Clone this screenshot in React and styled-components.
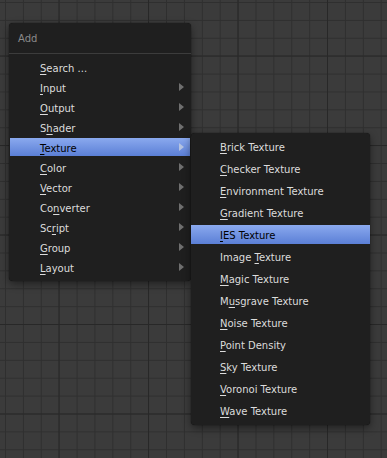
import React from "react";
import styled, { createGlobalStyle } from "styled-components";

const GlobalStyle = createGlobalStyle`
  html, body {
    margin: 0;
    padding: 0;
    width: 387px;
    height: 458px;
    overflow: hidden;
  }
  body {
    font-family: "DejaVu Sans", "Liberation Sans", sans-serif;
  }
`;

const Canvas = styled.div`
  position: relative;
  width: 387px;
  height: 458px;
  background-color: #3b3b3b;
  background-image:
    linear-gradient(90deg, #282828 1px, transparent 1px),
    linear-gradient(0deg, #282828 1px, transparent 1px),
    linear-gradient(90deg, #2f2f2f 1px, transparent 1px),
    linear-gradient(0deg, #2f2f2f 1px, transparent 1px);
  background-size: 89.5px 89.5px, 89.5px 89.5px, 17.9px 17.9px, 17.9px 17.9px;
  background-position: 58.5px 0, 0 56.5px, 5px 0, 0 3px;
`;

const MenuStack = styled.div`
  position: absolute;
  left: 9px;
  top: 23px;
  display: flex;
  align-items: flex-start;
`;

const Menu = styled.div`
  width: ${({ $width }) => $width}px;
  margin-top: ${({ $offset }) => $offset || 0}px;
  padding: ${({ $pad }) => $pad};
  box-sizing: border-box;
  background: #1f1f1f;
  border-radius: 4px;
  box-shadow: 0 0 1px rgba(0, 0, 0, 0.9), 0 3px 9px rgba(0, 0, 0, 0.45);
  display: flex;
  flex-direction: column;
  gap: ${({ $gap }) => $gap}px;
`;

const Title = styled.div`
  height: 30px;
  padding-left: 9px;
  display: flex;
  align-items: center;
  font-size: 10px;
  color: #8a8a8a;
  border-bottom: 1px solid #3c3c3c;
  margin-bottom: 2px;
`;

const Item = styled.div`
  height: ${({ $h }) => $h}px;
  margin: 0 ${({ $inset }) => $inset}px;
  padding: 2px 0 0 ${({ $indent }) => $indent}px;
  box-sizing: border-box;
  display: flex;
  align-items: center;
  justify-content: space-between;
  font-size: 10px;
  color: ${({ $active }) => ($active ? "#000" : "#dcdcdc")};
  background: ${({ $active }) =>
    $active ? "linear-gradient(180deg, #8aa9ee 0%, #5b7fd6 100%)" : "transparent"};
`;

const Key = styled.span`
  text-decoration: underline;
  text-underline-offset: 2px;
  text-decoration-thickness: 1px;
`;

const Arrow = styled.span`
  width: 0;
  height: 0;
  margin-right: 6px;
  margin-top: -2px;
  border-top: 4px solid transparent;
  border-bottom: 4px solid transparent;
  border-left: 5px solid ${({ $active }) => ($active ? "#b5c3e0" : "#6f6f6f")};
`;

const Label = ({ text, k }) => {
  const i = text.indexOf(k);
  return (
    <span>
      {text.slice(0, i)}
      <Key>{k}</Key>
      {text.slice(i + k.length)}
    </span>
  );
};

const mainItems = [
  ["Search ...", "S", false],
  ["Input", "I", true],
  ["Output", "O", true],
  ["Shader", "h", true],
  ["Texture", "T", true],
  ["Color", "C", true],
  ["Vector", "V", true],
  ["Converter", "n", true],
  ["Script", "r", true],
  ["Group", "G", true],
  ["Layout", "L", true],
];

const textureItems = [
  ["Brick Texture", "B"],
  ["Checker Texture", "C"],
  ["Environment Texture", "E"],
  ["Gradient Texture", "G"],
  ["IES Texture", "I"],
  ["Image Texture", "T"],
  ["Magic Texture", "M"],
  ["Musgrave Texture", "u"],
  ["Noise Texture", "N"],
  ["Point Density", "P"],
  ["Sky Texture", "S"],
  ["Voronoi Texture", "V"],
  ["Wave Texture", "W"],
];

export default function App() {
  return (
    <>
      <GlobalStyle />
      <Canvas>
        <MenuStack>
          <Menu $width={182} $pad="0 0 5px" $gap={2}>
            <Title>Add</Title>
            {mainItems.map(([text, k, sub]) => (
              <Item key={text} $h={18} $inset={1} $indent={30} $active={text === "Texture"}>
                <Label text={text} k={k} />
                {sub && <Arrow $active={text === "Texture"} />}
              </Item>
            ))}
          </Menu>
          <Menu $width={179} $offset={110} $pad="4px 0 5px" $gap={3}>
            {textureItems.map(([text, k]) => (
              <Item key={text} $h={19} $inset={0} $indent={29} $active={text === "IES Texture"}>
                <Label text={text} k={k} />
              </Item>
            ))}
          </Menu>
        </MenuStack>
      </Canvas>
    </>
  );
}
